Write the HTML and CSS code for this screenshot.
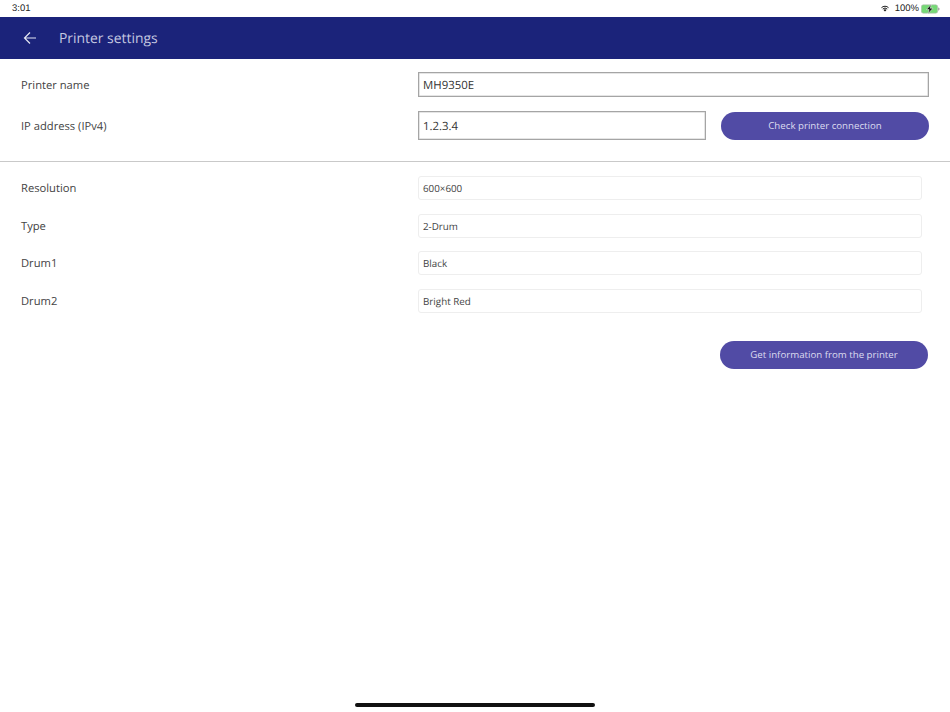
FILE: index.html
```html
<!DOCTYPE html>
<html lang="en">
<head>
<meta charset="utf-8">
<title>Printer settings</title>
<link rel="stylesheet" href="styles.css">
</head>
<body>
<div class="page">
  <div class="status">
    <span class="time">3:01</span>
    <div class="status-right">
      <svg class="wifi" width="8" height="7" viewBox="0 0 10 8"><path d="M5 7.8 3.2 5.8a2.5 2.5 0 0 1 3.6 0z" fill="#111"/><path d="M2.2 4.7a4 4 0 0 1 5.6 0" fill="none" stroke="#111" stroke-width="1.2"/><path d="M.6 3a6.2 6.2 0 0 1 8.8 0" fill="none" stroke="#111" stroke-width="1.2"/></svg>
      <span class="pct">100%</span>
      <svg class="battery" width="19" height="10" viewBox="0 0 19 10"><rect x="0.3" y="0.8" width="16.4" height="8.4" rx="2" fill="#75d975" stroke="#bbb" stroke-width=".6"/><path d="M17.2 3.4c.9.2 1.3.8 1.3 1.6s-.4 1.4-1.3 1.6z" fill="#999"/><path d="M10.3.3 5.4 5.6h2.7L7 9.7l5-5.5H9.2z" fill="#111" stroke="#fff" stroke-width=".5"/></svg>
    </div>
  </div>
  <header class="appbar">
    <svg class="back" width="14" height="14" viewBox="0 0 14 14"><path d="M7 1.5 1.5 7 7 12.5M1.5 7H13" fill="none" stroke="#e4e6f2" stroke-width="1.2"/></svg>
    <h1 class="title">Printer settings</h1>
  </header>
  <section class="top">
    <div class="row row-name">
      <label class="label">Printer name</label>
      <div class="input input-full">MH9350E</div>
    </div>
    <div class="row row-ip">
      <label class="label">IP address (IPv4)</label>
      <div class="input input-ip">1.2.3.4</div>
      <button class="btn btn-check">Check printer connection</button>
    </div>
  </section>
  <section class="info">
    <div class="row info-row"><label class="label">Resolution</label><div class="field">600×600</div></div>
    <div class="row info-row"><label class="label">Type</label><div class="field">2-Drum</div></div>
    <div class="row info-row"><label class="label">Drum1</label><div class="field">Black</div></div>
    <div class="row info-row"><label class="label">Drum2</label><div class="field">Bright Red</div></div>
    <div class="actions"><button class="btn btn-get">Get information from the printer</button></div>
  </section>
  <div class="spacer"></div>
  <div class="home-wrap"><div class="home"></div></div>
</div>
</body>
</html>
```
FILE: styles.css
```css
* { box-sizing: border-box; }
html, body { margin: 0; padding: 0; background: #fff; }
.page { width: 950px; height: 712px; display: flex; flex-direction: column; overflow: hidden; font-family: "Open Sans", sans-serif; color: #444; text-rendering: geometricPrecision; }
.status { height: 17px; flex: none; display: flex; justify-content: space-between; align-items: center; padding: 0 10px 0 12px; font-family: "Liberation Sans", sans-serif; font-size: 9.5px; color: #222; }
.status-right { display: flex; align-items: center; gap: 2px; }
.pct { margin: 0 0 0 4px; }
.appbar { height: 41.5px; flex: none; background: #1b237a; display: flex; align-items: center; padding-left: 23px; }
.back { margin-right: 22px; }
.title { margin: 0; padding-top: 1.5px; font-size: 13.9px; font-weight: 400; color: #c5c8e0; }
.top { flex: none; height: 103.5px; padding: 13.5px 21px 0; border-bottom: 1.5px solid #c9c9c9; }
.row { display: flex; align-items: center; }
.label { width: 397px; flex: none; padding-top: 1.5px; font-size: 11.2px; color: #444; }
.row-name { height: 25px; margin-bottom: 14px; }
.row-ip { height: 29px; }
.input { height: 100%; background: #fff; border: 1px solid #a5a5a5; box-shadow: inset 0 0 0 .5px #ccc; font-size: 11.4px; color: #333; display: flex; align-items: center; padding: 1px 0 0 4px; }
.input-full { width: 511px; }
.input-ip { width: 288px; }
.btn { border: 0; padding: 0; background: #514ba5; color: #ddddf0; font-family: inherit; font-size: 9.7px; border-radius: 14px; height: 28px; }
.btn-check { width: 208px; margin-left: 15px; }
.info { flex: none; padding: 14px 21px 0; }
.info-row { height: 24px; margin-bottom: 13.5px; }
.field { width: 504px; height: 100%; border: 1px solid #eee; border-radius: 3px; font-size: 9.8px; color: #444; display: flex; align-items: center; padding: 1px 0 0 4px; }
.actions { display: flex; justify-content: flex-end; padding: 14.5px 1px 0 0; }
.btn-get { width: 208px; height: 28px; }
.spacer { flex: 1; }
.home-wrap { flex: none; height: 9px; display: flex; justify-content: center; }
.home { width: 240px; height: 3.5px; border-radius: 2px; background: #111; }
```
